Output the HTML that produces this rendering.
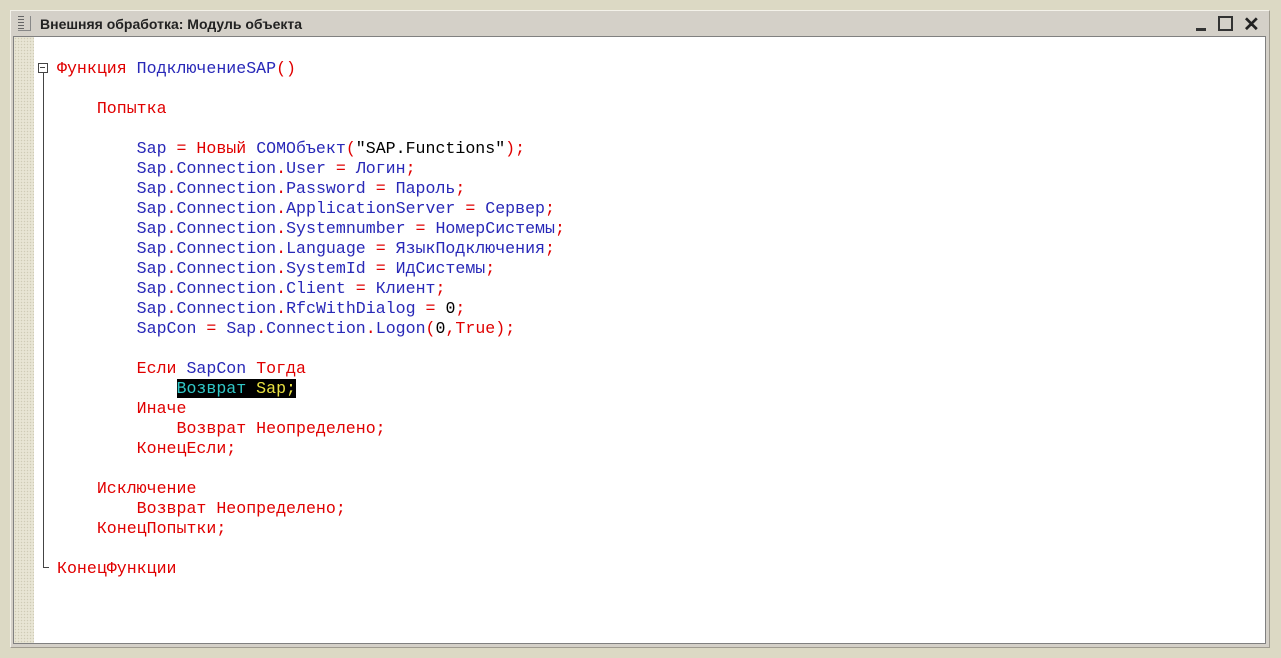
<!DOCTYPE html>
<html><head><meta charset="utf-8"><style>
body{margin:0;width:1281px;height:658px;background:#dcd9c4;position:relative;overflow:hidden;font-family:"Liberation Sans",sans-serif}
.win{position:absolute;left:10px;top:10px;width:1260px;height:638px;background:#d4d0c8;border:1px solid #f4f2ea;border-right-color:#a09c90;border-bottom-color:#a09c90;box-sizing:border-box}
.title{position:absolute;left:40px;top:16px;font-size:14px;font-weight:bold;color:#222}
.ico{position:absolute;left:18px;top:16px;width:12px;height:14px;border:1px solid #888;border-left:none;border-top:none;background:repeating-linear-gradient(#666 0 1px,transparent 1px 3px);background-size:6px 100%;background-repeat:no-repeat}
.edit{position:absolute;left:13px;top:36px;width:1253px;height:608px;border:1px solid #808080;box-sizing:border-box;background:#fff}
.gut{position:absolute;left:14px;top:37px;width:20px;height:606px;background:#e8e5d4;background-image:radial-gradient(#cfcbb5 30%,transparent 40%);background-size:3px 3px}
pre{position:absolute;left:57px;top:59px;margin:0;font-family:"Liberation Mono",monospace;font-size:16.6px;line-height:20px;color:#0000a8}
.r{color:#e00000}.b{color:#2828b8}.k{color:#000}
.hl{background:#000}.c{color:#30c8c8}.y{color:#e8e040}
.btn{position:absolute;top:14px;color:#222}
</style></head><body>
<div class="win"></div>
<div class="ico"></div>
<div class="title">Внешняя обработка: Модуль объекта</div>
<div class="btn" style="left:1196px;top:28px;width:10px;height:3px;background:#333"></div>
<div class="btn" style="left:1218px;top:16px;border:2px solid #333;width:11px;height:11px"></div>
<div class="btn" style="left:1243px;top:12px;font-size:20px;font-weight:bold">✕</div>
<div class="edit"></div>
<div class="gut"></div>
<div style="position:absolute;left:38px;top:63px;width:8px;height:8px;border:1px solid #444;background:#fff"></div>
<div style="position:absolute;top:67px;width:5px;height:1px;background:#444;left:40px"></div>
<div style="position:absolute;left:43px;top:73px;width:1px;height:495px;background:#444"></div>
<div style="position:absolute;left:43px;top:567px;width:6px;height:1px;background:#444"></div>
<pre><span class="r">Функция </span><span class="b">ПодключениеSAP</span><span class="r">()</span>

    <span class="r">Попытка</span>

        <span class="b">Sap </span><span class="r">= Новый </span><span class="b">COMОбъект</span><span class="r">(</span><span class="k">"SAP.Functions"</span><span class="r">);</span>
        <span class="b">Sap</span><span class="r">.</span><span class="b">Connection</span><span class="r">.</span><span class="b">User </span><span class="r">=</span> <span class="b">Логин</span><span class="r">;</span>
        <span class="b">Sap</span><span class="r">.</span><span class="b">Connection</span><span class="r">.</span><span class="b">Password </span><span class="r">=</span> <span class="b">Пароль</span><span class="r">;</span>
        <span class="b">Sap</span><span class="r">.</span><span class="b">Connection</span><span class="r">.</span><span class="b">ApplicationServer </span><span class="r">=</span> <span class="b">Сервер</span><span class="r">;</span>
        <span class="b">Sap</span><span class="r">.</span><span class="b">Connection</span><span class="r">.</span><span class="b">Systemnumber </span><span class="r">=</span> <span class="b">НомерСистемы</span><span class="r">;</span>
        <span class="b">Sap</span><span class="r">.</span><span class="b">Connection</span><span class="r">.</span><span class="b">Language </span><span class="r">=</span> <span class="b">ЯзыкПодключения</span><span class="r">;</span>
        <span class="b">Sap</span><span class="r">.</span><span class="b">Connection</span><span class="r">.</span><span class="b">SystemId </span><span class="r">=</span> <span class="b">ИдСистемы</span><span class="r">;</span>
        <span class="b">Sap</span><span class="r">.</span><span class="b">Connection</span><span class="r">.</span><span class="b">Client </span><span class="r">=</span> <span class="b">Клиент</span><span class="r">;</span>
        <span class="b">Sap</span><span class="r">.</span><span class="b">Connection</span><span class="r">.</span><span class="b">RfcWithDialog </span><span class="r">=</span> <span class="k">0</span><span class="r">;</span>
        <span class="b">SapCon </span><span class="r">=</span> <span class="b">Sap</span><span class="r">.</span><span class="b">Connection</span><span class="r">.</span><span class="b">Logon</span><span class="r">(</span><span class="k">0</span><span class="r">,True);</span>

        <span class="r">Если </span><span class="b">SapCon </span><span class="r">Тогда</span>
            <span class="hl"><span class="c">Возврат </span><span class="y">Sap;</span></span>
        <span class="r">Иначе</span>
            <span class="r">Возврат Неопределено;</span>
        <span class="r">КонецЕсли;</span>

    <span class="r">Исключение</span>
        <span class="r">Возврат Неопределено;</span>
    <span class="r">КонецПопытки;</span>

<span class="r">КонецФункции</span></pre>
</body></html>
